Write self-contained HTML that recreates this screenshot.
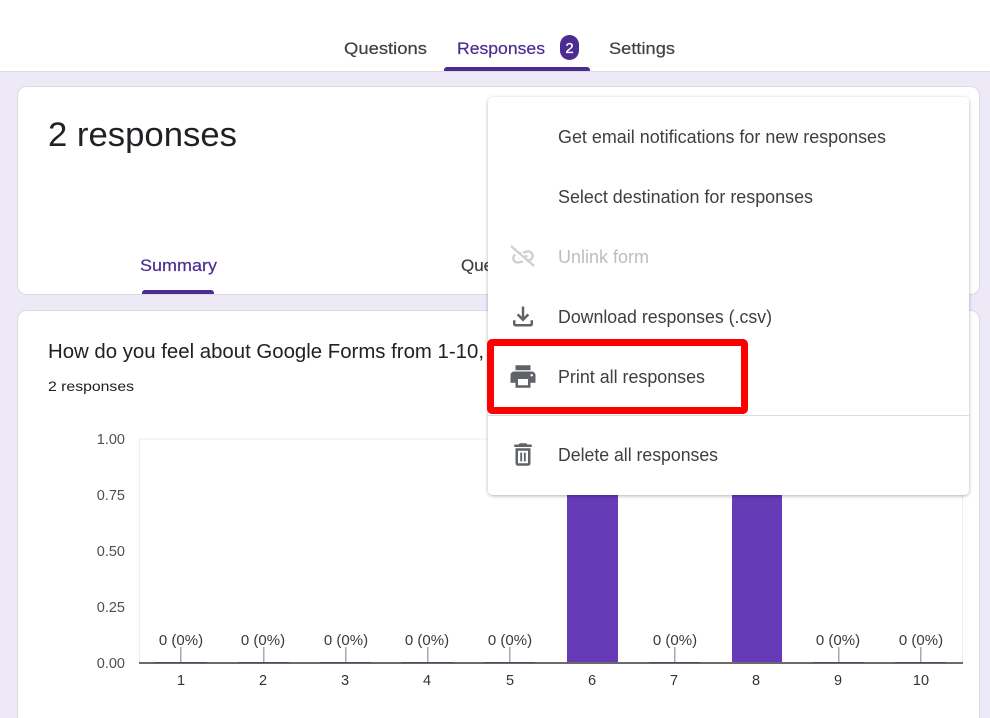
<!DOCTYPE html>
<html><head><meta charset="utf-8"><title>Responses</title>
<style>
html,body{margin:0;padding:0;background:#ede9f7;width:990px;height:718px;overflow:hidden}
svg{display:block}
text{font-family:"Liberation Sans",sans-serif}
.t{font-size:17px;fill:#3c4043;stroke:#3c4043;stroke-width:.2px}
.p{fill:#4d2c91;stroke:#4d2c91}
.m{font-size:18px;fill:#3c4043}
.y{font-size:14.500px;fill:#4f4f4f;text-anchor:end}
.v{font-size:15px;fill:#3a3a3a;text-anchor:middle}
.x{font-size:14.500px;fill:#333;text-anchor:middle}
</style></head><body>
<svg width="990" height="718" viewBox="0 0 990 718" xmlns="http://www.w3.org/2000/svg">
<defs>
<filter id="s" x="-5%" y="-5%" width="110%" height="110%"><feDropShadow dx="0" dy="1" stdDeviation="1.800" flood-color="#000" flood-opacity=".3"/></filter>
</defs>
<rect width="990" height="718" fill="#ede9f7"/>
<rect width="990" height="71" fill="#fff"/>
<rect y="71" width="990" height="1" fill="#dadce0"/>
<text class="t" x="344" y="54" textLength="83" lengthAdjust="spacingAndGlyphs">Questions</text>
<text class="t p" x="457" y="54" textLength="88" lengthAdjust="spacingAndGlyphs">Responses</text>
<rect x="560" y="35" width="19" height="25" rx="9.500" fill="#4d2c91"/>
<text x="569.500" y="53" font-size="15" fill="#fff" text-anchor="middle" stroke="#fff" stroke-width=".3">2</text>
<text class="t" x="609" y="54" textLength="66" lengthAdjust="spacingAndGlyphs">Settings</text>
<path d="M444 71v-1a3 3 0 0 1 3-3h140a3 3 0 0 1 3 3v1z" fill="#4d2c91"/>

<rect x="17.500" y="86.500" width="962" height="208" rx="9" fill="#fff" stroke="#dadce0"/>
<text x="48" y="146" font-size="34" fill="#202124" textLength="189" lengthAdjust="spacingAndGlyphs">2 responses</text>
<text x="140" y="271" font-size="17" fill="#4d2c91" stroke="#4d2c91" stroke-width=".2" textLength="77" lengthAdjust="spacingAndGlyphs">Summary</text>
<path d="M142 294v-1a3 3 0 0 1 3-3h66a3 3 0 0 1 3 3v1z" fill="#4d2c91"/>
<text x="461" y="271" font-size="17" fill="#3c4043" stroke="#3c4043" stroke-width=".2">Question</text>
<rect x="967" y="120" width="2" height="15" fill="#bbb"/>

<rect x="17.500" y="310.500" width="962" height="440" rx="9" fill="#fff" stroke="#dadce0"/>
<text x="48" y="358" font-size="20" fill="#202124" textLength="436" lengthAdjust="spacingAndGlyphs">How do you feel about Google Forms from 1-10,</text>
<text x="48" y="391" font-size="14" fill="#202124" textLength="86" lengthAdjust="spacingAndGlyphs">2 responses</text>

<rect x="139" y="438.500" width="824" height="1" fill="#eee"/>
<rect x="139" y="439" width="1" height="223" fill="#eee"/>
<rect x="962" y="439" width="1" height="223" fill="#eee"/>
<text class="y" x="125" y="444">1.00</text>
<text class="y" x="125" y="500">0.75</text>
<text class="y" x="125" y="556">0.50</text>
<text class="y" x="125" y="612">0.25</text>
<text class="y" x="125" y="668">0.00</text>

<rect x="567" y="439" width="51" height="223" fill="#673ab7"/>
<rect x="732" y="439" width="50" height="223" fill="#673ab7"/>

<g fill="#aaa">
<rect x="180" y="647" width="1.500" height="15"/><rect x="263" y="647" width="1.500" height="15"/><rect x="345" y="647" width="1.500" height="15"/><rect x="427" y="647" width="1.500" height="15"/><rect x="509" y="647" width="1.500" height="15"/><rect x="674" y="647" width="1.500" height="15"/><rect x="838" y="647" width="1.500" height="15"/><rect x="920" y="647" width="1.500" height="15"/>
</g>
<rect x="139" y="662" width="824" height="2" fill="#6a6a6a"/>
<g fill="#4f4a68">
<rect x="155" y="662" width="52" height="1"/><rect x="238" y="662" width="51" height="1"/><rect x="320" y="662" width="51" height="1"/><rect x="402" y="662" width="51" height="1"/><rect x="484" y="662" width="51" height="1"/><rect x="649" y="662" width="51" height="1"/><rect x="813" y="662" width="51" height="1"/><rect x="895" y="662" width="51" height="1"/>
</g>
<g>
<text class="v" x="181" y="645">0 (0%)</text><text class="v" x="263" y="645">0 (0%)</text><text class="v" x="346" y="645">0 (0%)</text><text class="v" x="427" y="645">0 (0%)</text><text class="v" x="510" y="645">0 (0%)</text><text class="v" x="675" y="645">0 (0%)</text><text class="v" x="838" y="645">0 (0%)</text><text class="v" x="921" y="645">0 (0%)</text>
<text class="x" x="181" y="685">1</text><text class="x" x="263" y="685">2</text><text class="x" x="345" y="685">3</text><text class="x" x="427" y="685">4</text><text class="x" x="510" y="685">5</text><text class="x" x="592" y="685">6</text><text class="x" x="674" y="685">7</text><text class="x" x="756" y="685">8</text><text class="x" x="838" y="685">9</text><text class="x" x="921" y="685">10</text>
</g>

<rect x="488" y="97" width="481" height="398" rx="5" fill="#fff" filter="url(#s)"/>
<text class="m" x="558" y="143" textLength="328" lengthAdjust="spacingAndGlyphs">Get email notifications for new responses</text>
<text class="m" x="558" y="203" textLength="255" lengthAdjust="spacingAndGlyphs">Select destination for responses</text>
<text class="m" x="558" y="263" textLength="91" lengthAdjust="spacingAndGlyphs" style="fill:#bdbdbd">Unlink form</text>
<text class="m" x="558" y="323" textLength="214" lengthAdjust="spacingAndGlyphs">Download responses (.csv)</text>
<text class="m" x="558" y="383" textLength="147" lengthAdjust="spacingAndGlyphs">Print all responses</text>
<text class="m" x="558" y="461" textLength="160" lengthAdjust="spacingAndGlyphs">Delete all responses</text>
<rect x="488" y="415" width="481" height="1" fill="#dadce0"/>

<g transform="translate(523 257) rotate(-12) scale(1.08) translate(-12 -12)" fill="#cfcfcf" stroke="#cfcfcf" stroke-width=".3">
<path d="M3.900 12c0-1.710 1.390-3.100 3.100-3.100h4V7H7c-2.760 0-5 2.240-5 5s2.240 5 5 5h4v-1.900H7c-1.710 0-3.100-1.390-3.100-3.100zM8 13h8v-2H8v2zm9-6h-4v1.900h4c1.710 0 3.100 1.390 3.100 3.100s-1.390 3.100-3.100 3.100h-4V17h4c2.760 0 5-2.240 5-5s-2.240-5-5-5z"/>
</g>
<path d="M511 248l23 20" stroke="#fff" stroke-width="4.500"/>
<path d="M511 246l23 20" stroke="#cfcfcf" stroke-width="2.200"/>
<g transform="translate(523 316.500) scale(1.25) translate(-12 -12)" fill="#5f6368"><path d="M18 15v3H6v-3H4v3c0 1.100.9 2 2 2h12c1.100 0 2-.9 2-2v-3h-2zm-1-4l-1.410-1.410L13 12.170V4h-2v8.170L8.410 9.590 7 11l5 5 5-5z"/></g>
<g transform="translate(523 376.500) scale(1.25) translate(-12 -12)" fill="#5f6368"><path d="M19 8H5c-1.660 0-3 1.340-3 3v6h4v4h12v-4h4v-6c0-1.660-1.340-3-3-3zm-3 11H8v-5h8v5zm3-7c-.55 0-1-.45-1-1s.45-1 1-1 1 .45 1 1-.45 1-1 1zm-1-9H6v4h12V3z"/></g>
<g transform="translate(523 454.500) scale(1.25) translate(-12 -12)" fill="#5f6368"><path d="M16 9v10H8V9h8m-1.500-6h-5l-1 1H5v2h14V4h-3.500l-1-1zM18 7H6v12c0 1.100.9 2 2 2h8c1.100 0 2-.9 2-2V7z"/><rect x="9.800" y="10.500" width="1.500" height="7"/><rect x="12.700" y="10.500" width="1.500" height="7"/></g>

<rect x="490.500" y="342.500" width="254" height="68" rx="1.500" fill="none" stroke="#ff0000" stroke-width="7"/>
</svg>
</body></html>
